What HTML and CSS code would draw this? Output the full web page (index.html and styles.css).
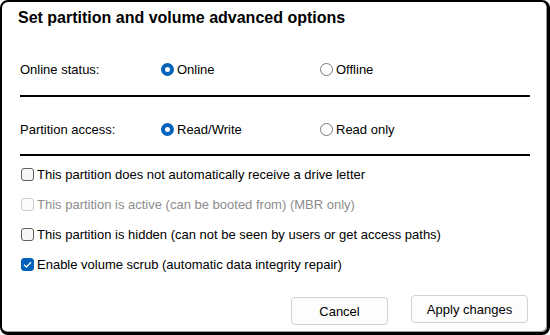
FILE: index.html
```html
<!DOCTYPE html>
<html lang="en">
<head>
    <meta charset="utf-8">
    <title>Advanced options</title>
    <link rel="stylesheet" href="styles.css">
</head>
<body>
    <div class="dialog">
        <h1 class="title">Set partition and volume advanced options</h1>

        <div class="field-row first">
            <span class="field-label">Online status:</span>
            <label class="option"><span class="radio checked"></span>Online</label>
            <label class="option"><span class="radio"></span>Offline</label>
        </div>
        <div class="separator sep-1"></div>

        <div class="field-row second">
            <span class="field-label">Partition access:</span>
            <label class="option"><span class="radio checked"></span>Read/Write</label>
            <label class="option"><span class="radio"></span>Read only</label>
        </div>
        <div class="separator sep-2"></div>

        <div class="checks">
            <label class="check-row"><span class="box"></span>This partition does not automatically receive a drive letter</label>
            <label class="check-row disabled"><span class="box"></span>This partition is active (can be booted from) (MBR only)</label>
            <label class="check-row"><span class="box"></span>This partition is hidden (can not be seen by users or get access paths)</label>
            <label class="check-row"><span class="box checked">
                <svg width="9" height="7" viewBox="0 0 9 7"><path d="M1 3.6 L3.4 6 L8 1.2" fill="none" stroke="#fff" stroke-width="1.3"/></svg>
            </span>Enable volume scrub (automatic data integrity repair)</label>
        </div>

        <div class="actions">
            <button class="btn btn-cancel">Cancel</button>
            <button class="btn btn-apply">Apply changes</button>
        </div>
    </div>
</body>
</html>
```

FILE: styles.css
```css
html, body {
    margin: 0;
    background: #fff;
}
body {
    font-family: "Liberation Sans", Arial, sans-serif;
    font-size: 13px;
    color: #000;
}
.dialog {
    box-sizing: border-box;
    width: 550px;
    height: 335px;
    border: 2px solid #000;
    border-right-width: 3px;
    border-bottom-width: 3px;
    border-radius: 8px;
    box-shadow: inset -1px -1px 0 #9a9a9a;
    padding: 0 18px 0 18px;
    background: #fff;
}
.title {
    margin: 0 0 0 -2px;
    padding-top: 6px;
    font-size: 16px;
    line-height: 20px;
    font-weight: bold;
}
.field-row {
    display: flex;
    align-items: center;
    height: 20px;
}
.field-row.first {
    margin-top: 31px;
}
.field-row.second {
    margin-top: 22px;
}
.field-label {
    width: 141px;
}
.option {
    display: flex;
    align-items: center;
    width: 159px;
}
.radio {
    box-sizing: border-box;
    width: 13px;
    height: 13px;
    border-radius: 50%;
    border: 1px solid #7a7a7a;
    background: #fff;
    margin-right: 3px;
}
.radio.checked {
    border: 4px solid #0063b9;
}
.separator {
    height: 2px;
    background: #000;
    width: 510px;
}
.sep-1 {
    margin-top: 16px;
}
.sep-2 {
    margin-top: 15px;
}
.checks {
    display: flex;
    flex-direction: column;
    gap: 10px;
    margin-top: 8px;
}
.check-row {
    display: flex;
    align-items: center;
    height: 20px;
    padding-left: 1px;
}
.box {
    box-sizing: border-box;
    display: flex;
    align-items: center;
    justify-content: center;
    width: 13px;
    height: 13px;
    border: 1px solid #5f5f5f;
    border-radius: 3px;
    background: #f6f6f6;
    margin-right: 3px;
}
.box.checked {
    border-color: #0063b9;
    background: #0063b9;
}
.check-row.disabled {
    color: #8d8d8d;
}
.check-row.disabled .box {
    border-color: #cdcdcd;
    background: #fbfbfb;
}
.actions {
    display: flex;
    justify-content: flex-end;
    gap: 23px;
    margin-top: 21px;
    padding-right: 1px;
}
.btn {
    font-family: inherit;
    font-size: 13px;
    color: #000;
    height: 28px;
    background: #fdfdfd;
    border: 1px solid #d2d2d2;
    border-radius: 4px;
    padding: 0;
}
.btn-cancel {
    width: 97px;
    margin-top: 2px;
}
.btn-apply {
    width: 117px;
}
```
